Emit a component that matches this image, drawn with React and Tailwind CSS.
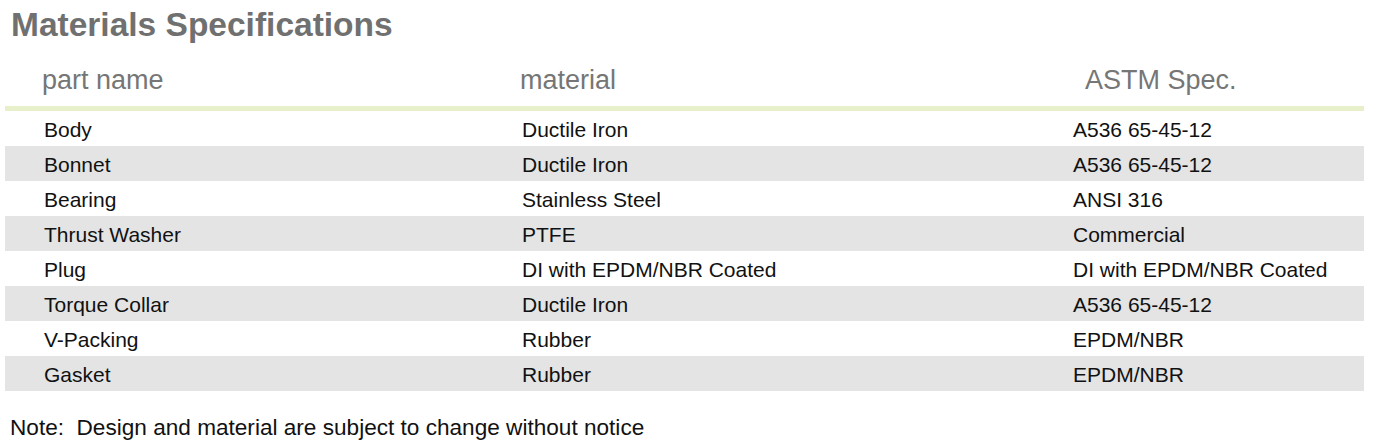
const rows = [
  ['Body', 'Ductile Iron', 'A536 65-45-12'],
  ['Bonnet', 'Ductile Iron', 'A536 65-45-12'],
  ['Bearing', 'Stainless Steel', 'ANSI 316'],
  ['Thrust Washer', 'PTFE', 'Commercial'],
  ['Plug', 'DI with EPDM/NBR Coated', 'DI with EPDM/NBR Coated'],
  ['Torque Collar', 'Ductile Iron', 'A536 65-45-12'],
  ['V-Packing', 'Rubber', 'EPDM/NBR'],
  ['Gasket', 'Rubber', 'EPDM/NBR'],
]

export default function App() {
  return (
    <div className="w-[1381px] h-[445px] bg-white font-['Liberation_Sans',Arial,sans-serif] overflow-hidden">
      <h1 className="pl-[11px] pt-[5px] text-[33.5px] leading-[40px] font-bold text-[#707070]">
        Materials Specifications
      </h1>

      <div className="mx-[5px] w-[1359px]">
        {/* header */}
        <div className="flex h-[61px] pt-[19px] text-[27px] leading-[32px] text-[#767676]">
          <div className="w-[515px] pl-[37px]">part name</div>
          <div className="w-[565px]">material</div>
          <div>ASTM Spec.</div>
        </div>
        <div className="h-[5px] bg-[#e7f0cb]" />

        {rows.map((r, i) => (
          <div
            key={i}
            className={`flex h-[35px] pt-[7px] text-[21px] leading-[24px] text-[#111] ${i % 2 === 1 ? 'bg-[#e4e4e4]' : ''}`}
          >
            <div className="w-[517px] pl-[39px]">{r[0]}</div>
            <div className="w-[551px]">{r[1]}</div>
            <div>{r[2]}</div>
          </div>
        ))}
      </div>

      <p className="pl-[10px] pt-[24px] text-[22.6px] leading-[26px] text-[#111]">
        Note:&nbsp; Design and material are subject to change without notice
      </p>
    </div>
  )
}
